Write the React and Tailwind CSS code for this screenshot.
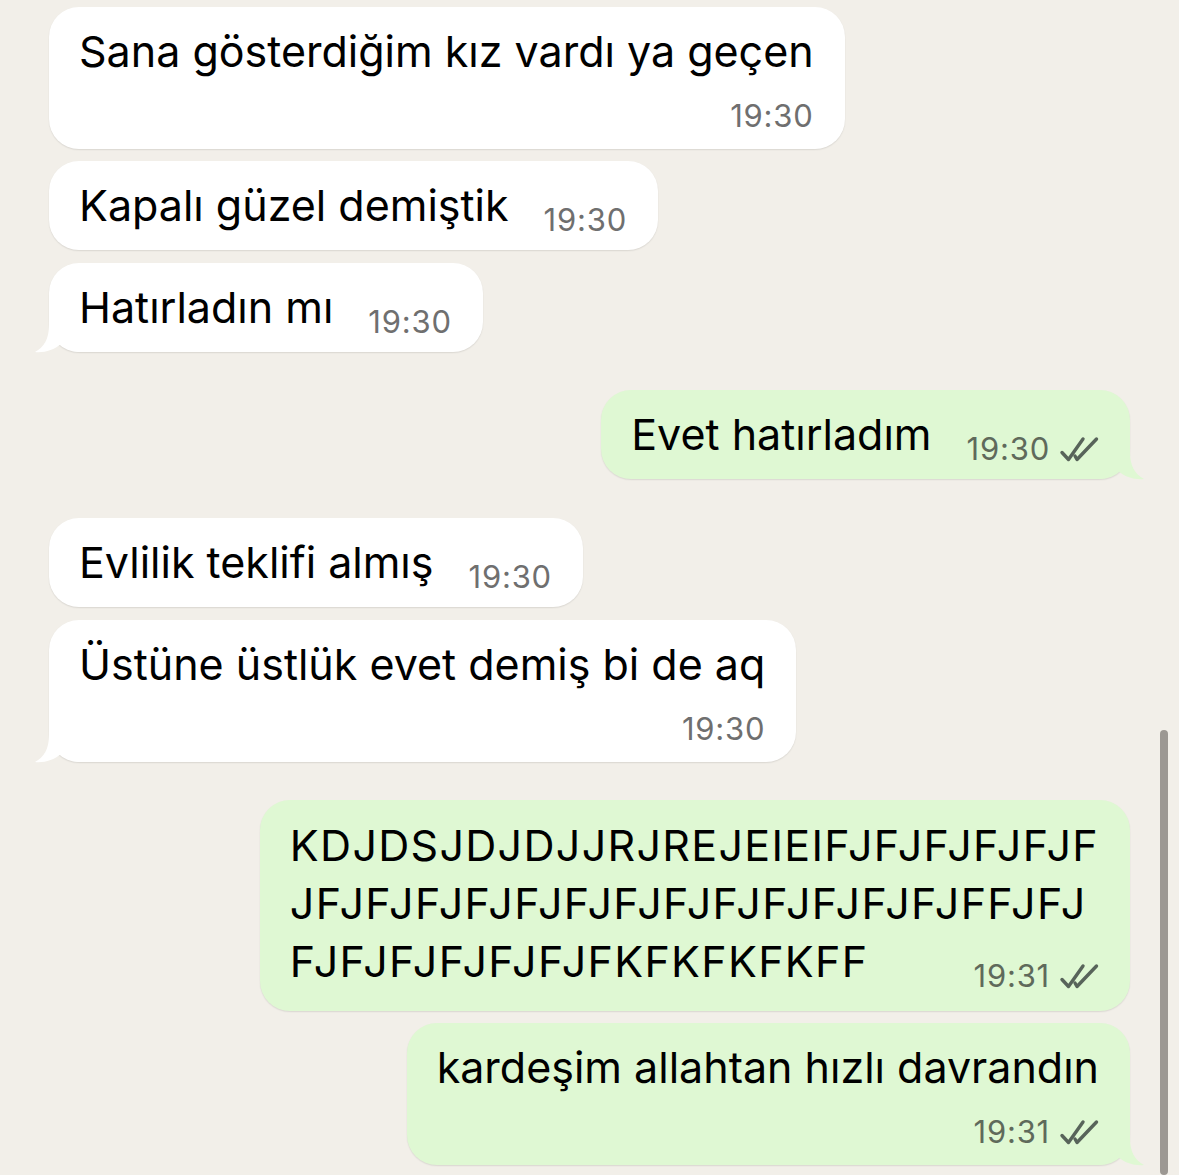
const font = { fontFamily: 'Inter, "Noto Sans", sans-serif' }

function Ticks() {
  return (
    <svg width="40" height="28" viewBox="0 0 40 28" fill="none" stroke="#58645a" strokeWidth="3.4" strokeLinecap="round" strokeLinejoin="round">
      <path d="M3 17.5L9.5 24.5L24 4" />
      <path d="M16 21L18 24.5L37.5 4" />
    </svg>
  )
}

function TailLeft() {
  return (
    <svg className="absolute left-[-19px] bottom-[-1px]" width="50" height="50" viewBox="0 0 50 50">
      <path d="M19 0V22C19 36 14 44 5 49C14 50 24 47 31 41C35 45 41 48 49 49V0Z" fill="#ffffff" />
    </svg>
  )
}

function TailRight() {
  return (
    <svg className="absolute right-[-19px] bottom-[-1px]" width="50" height="50" viewBox="0 0 50 50">
      <path d="M31 0V22C31 36 36 44 45 49C36 50 26 47 19 41C15 45 9 48 1 49V0Z" fill="#dff8d3" />
    </svg>
  )
}

function Time({ t, out }) {
  return (
    <span className={`flex items-center gap-[9px] text-[31px] leading-[36px] tracking-[0.8px] ${out ? 'text-[#5f6a5b]' : 'text-[#6f6f6f]'}`}>
      {t}
      {out && <Ticks />}
    </span>
  )
}

function Bubble({ out, tail, children }) {
  return (
    <div
      className={`relative rounded-[30px] pl-[30px] pr-[31px] shadow-[0_1px_1.5px_rgba(0,0,0,0.1)] ${out ? 'self-end bg-[#dff8d3]' : 'self-start bg-white'}`}
    >
      {tail && (out ? <TailRight /> : <TailLeft />)}
      <div className="relative">{children}</div>
    </div>
  )
}

function Inline({ text, t, out, tail }) {
  return (
    <Bubble out={out} tail={tail}>
      <div className="flex items-baseline gap-[35px] pt-[15px] pb-[16px]">
        <span className="text-[43px] leading-[58px] text-black">{text}</span>
        <span className="translate-y-[10px]">
          <Time t={t} out={out} />
        </span>
      </div>
    </Bubble>
  )
}

function Stacked({ text, t, out, tail }) {
  return (
    <Bubble out={out} tail={tail}>
      <div className="pt-[15px] pb-[15px]">
        <div className="text-[43px] leading-[58px] text-black">{text}</div>
        <div className="mt-[18px] flex justify-end">
          <Time t={t} out={out} />
        </div>
      </div>
    </Bubble>
  )
}

export default function App() {
  return (
    <div className="relative h-[1175px] w-[1179px] overflow-hidden bg-[#f2efe9]" style={font}>
      <div className="flex flex-col px-[49px] pt-[7px]">
        <Stacked text="Sana gösterdiğim kız vardı ya geçen" t="19:30" />
        <div className="mt-[12px] flex flex-col">
          <Inline text="Kapalı güzel demiştik" t="19:30" />
        </div>
        <div className="mt-[13px] flex flex-col">
          <Inline text="Hatırladın mı" t="19:30" tail />
        </div>

        <div className="mt-[38px] flex flex-col">
          <Inline text="Evet hatırladım" t="19:30" out tail />
        </div>

        <div className="mt-[39px] flex flex-col">
          <Inline text="Evlilik teklifi almış" t="19:30" />
        </div>
        <div className="mt-[13px] flex flex-col">
          <Stacked text="Üstüne üstlük evet demiş bi de aq" t="19:30" tail />
        </div>

        <div className="mt-[38px] flex flex-col">
          <Bubble out>
            <div className="pt-[16px] pb-[21px] text-[43px] leading-[58px] tracking-[1.3px] text-black">
              <div>KDJDSJDJDJJRJREJEIEIFJFJFJFJFJF</div>
              <div>JFJFJFJFJFJFJFJFJFJFJFJFJFJFFJFJ</div>
              <div className="flex items-baseline justify-between gap-[40px]">
                <span>FJFJFJFJFJFJFKFKFKFKFF</span>
                <span className="translate-y-[10px] tracking-normal">
                  <Time t="19:31" out />
                </span>
              </div>
            </div>
          </Bubble>
        </div>
        <div className="mt-[12px] flex flex-col">
          <Stacked text="kardeşim allahtan hızlı davrandın" t="19:31" out tail />
        </div>
      </div>

      <div className="absolute right-[11px] top-[730px] bottom-0 w-[8px] rounded-full bg-[#9c9893]" />
    </div>
  )
}
